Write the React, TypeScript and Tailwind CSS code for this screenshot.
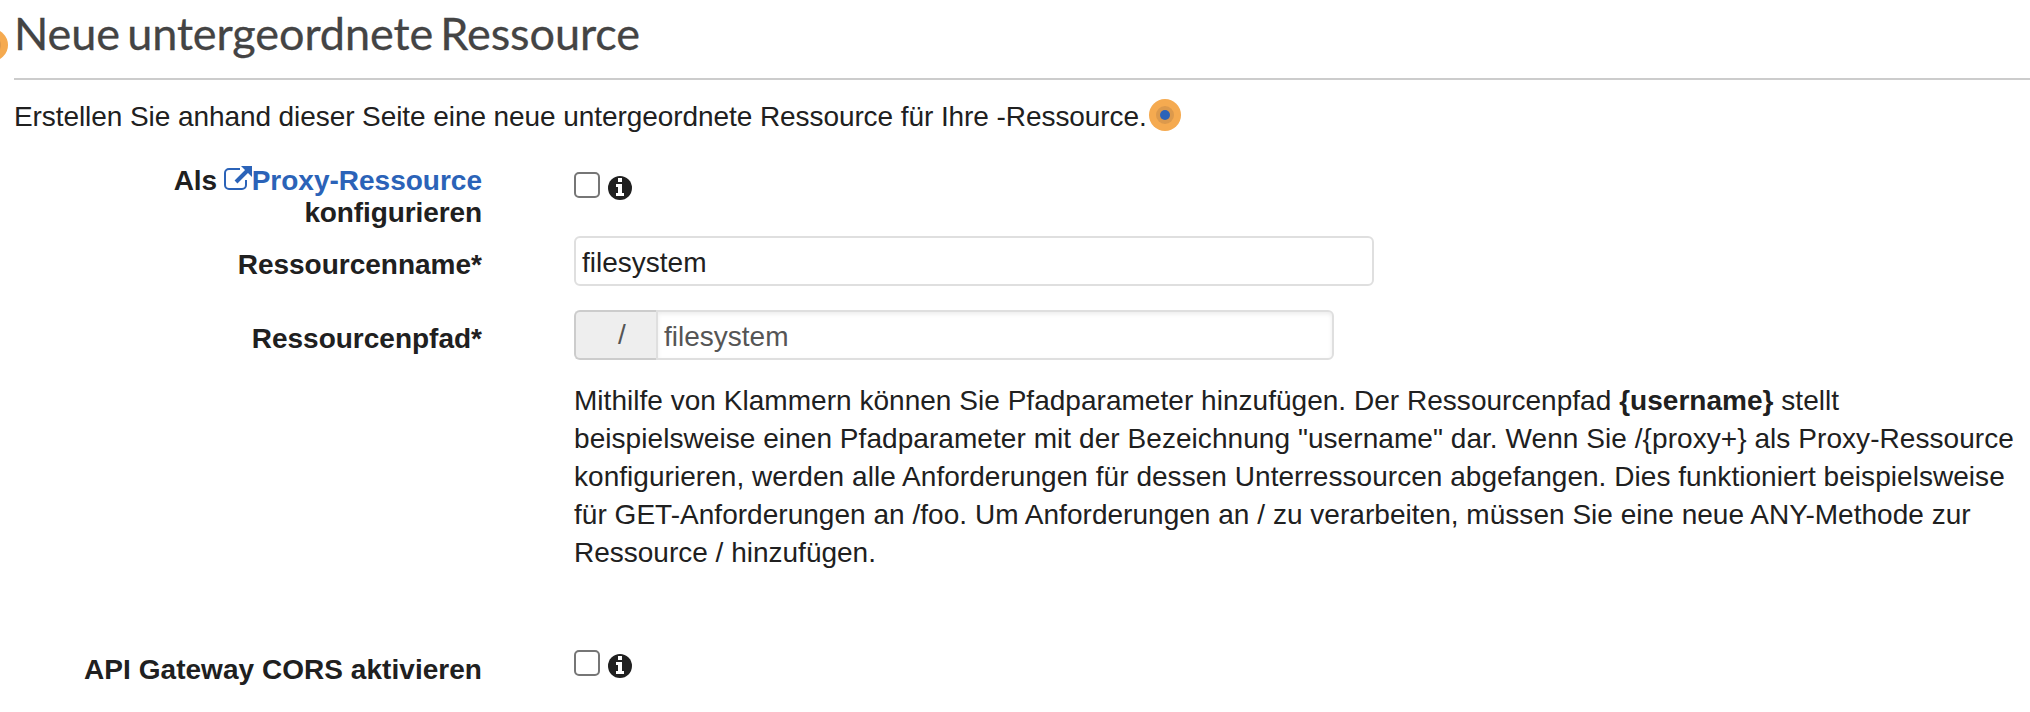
import React from "react";

function Info() {
  return (
    <svg className="ml-2 mt-1 block h-6 w-6" viewBox="0 0 24 24" aria-label="Info">
      <circle cx="12" cy="12" r="12" fill="#202020" />
      <path d="M10 2h4v4h-4zM8 8h6v9h2v3H8v-3h2v-6H8z" fill="#fff" />
    </svg>
  );
}

function CheckRow() {
  return (
    <div className="flex items-start">
      <button role="checkbox" aria-checked="false" className="h-[26px] w-[26px] rounded-[5px] border-2 border-[#767676] bg-white" />
      <Info />
    </div>
  );
}

function Label({ className, children }: { className: string; children: React.ReactNode }) {
  return <div className={`w-[482px] shrink-0 text-right font-bold leading-8 ${className}`}>{children}</div>;
}

function Dot() {
  return (
    <span className="flex h-8 w-8 shrink-0 items-center justify-center rounded-full bg-[#f5aa50]">
      <span className="flex h-[18px] w-[18px] items-center justify-center rounded-full bg-[#dc994c]">
        <span className="h-[10px] w-[10px] rounded-full bg-[#2b63b8]" />
      </span>
    </span>
  );
}

export default function App() {
  return (
    <div className="relative h-[712px] w-[2030px] overflow-hidden bg-white font-['Liberation_Sans',Arial,sans-serif] text-[28px] text-[#202020]">
      <div className="absolute -left-6 top-[29px]"><Dot /></div>
      <header className="ml-[14px] h-20 border-b-2 border-[#cccccc]">
        <h1 className="whitespace-nowrap pt-[5px] font-['Lato',sans-serif] text-[45px] leading-[56px] tracking-[-0.08px] text-[#444444] [-webkit-text-stroke:0.3px_#444444] [word-spacing:-4.2px]">Neue untergeordnete Ressource</h1>
      </header>
      <div className="ml-[14px] flex h-[84px] pt-[18px]">
        <p className="w-[1135px] whitespace-nowrap leading-[38px] tracking-[-0.075px]">Erstellen Sie anhand dieser Seite eine neue untergeordnete Ressource für Ihre -Ressource.</p>
        <div className="pt-px"><Dot /></div>
      </div>
      <div className="flex h-[72px]">
        <Label className="pt-px tracking-[-0.1px]">
          Als{" "}
          <a className="tracking-normal text-[#2b63b8]">
            <svg className="-ml-px inline-block h-7 w-7 align-[-3px]" viewBox="0 0 28 28" fill="none" stroke="#2b63b8">
              <path d="M16 4H5a4 4 0 0 0-4 4v12a4 4 0 0 0 4 4h13a4 4 0 0 0 4-4v-5" strokeWidth="2" />
              <path d="M12 17 23 6" strokeWidth="4" />
              <path d="M17 1h11v11z" fill="#2b63b8" stroke="none" />
            </svg>
            Proxy-Ressource
          </a>
          <br />
          konfigurieren
        </Label>
        <div className="ml-[92px] pt-2"><CheckRow /></div>
      </div>
      <div className="flex h-[74px]">
        <Label className="pt-[13px]">Ressourcenname*</Label>
        <div className="ml-[92px] h-[50px] w-[800px] rounded-md border-2 border-[#dfdfdf] px-[6px] leading-[49px]">filesystem</div>
      </div>
      <div className="flex h-[72px]">
        <Label className="pt-[13px]">Ressourcenpfad*</Label>
        <div className="ml-[92px] flex h-[50px] w-[760px]">
          <div className="w-[82px] rounded-l-md border-2 border-r-0 border-[#cccccc] bg-[#eeeeee] pl-[42px] leading-[45px] text-[#555555]">/</div>
          <div className="grow rounded-r-md border-2 border-[#dfdfdf] px-[6px] leading-[49px] text-[#555555] shadow-[inset_0_2px_4px_rgba(0,0,0,0.08)]">filesystem</div>
        </div>
      </div>
      <div className="ml-[574px] h-[268px] leading-[38px]">
        <p className="whitespace-nowrap">
          <span className="block tracking-[0.03px]">Mithilfe von Klammern können Sie Pfadparameter hinzufügen. Der Ressourcenpfad <b>{"{username}"}</b> stellt</span>
          <span className="block tracking-[0.06px]">beispielsweise einen Pfadparameter mit der Bezeichnung "username" dar. Wenn Sie /{"{proxy+}"} als Proxy-Ressource</span>
          <span className="block tracking-[0.045px]">konfigurieren, werden alle Anforderungen für dessen Unterressourcen abgefangen. Dies funktioniert beispielsweise</span>
          <span className="block tracking-[0.03px]">für GET-Anforderungen an /foo. Um Anforderungen an / zu verarbeiten, müssen Sie eine neue ANY-Methode zur</span>
          <span className="block">Ressource / hinzufügen.</span>
        </p>
      </div>
      <div className="flex">
        <Label className="pt-1 tracking-[0.04px]">API Gateway CORS aktivieren</Label>
        <div className="ml-[92px]"><CheckRow /></div>
      </div>
    </div>
  );
}
